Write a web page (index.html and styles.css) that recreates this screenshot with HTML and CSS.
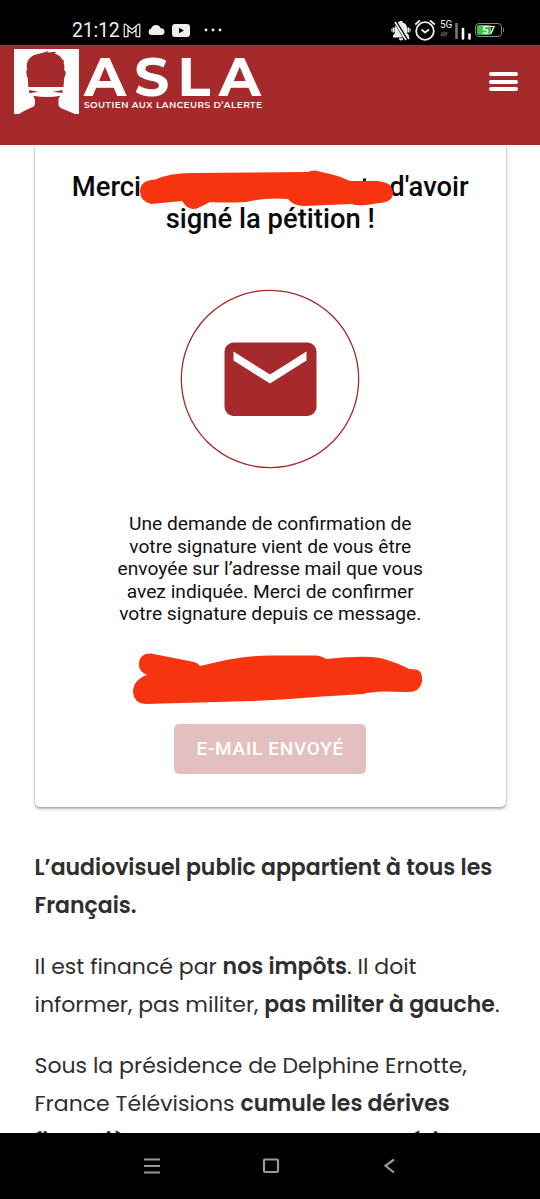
FILE: index.html
```html
<!DOCTYPE html>
<html lang="fr">
<head>
  <meta charset="UTF-8" />
  <meta name="viewport" content="width=device-width, initial-scale=1.0" />
  <title>ASLA – Soutien aux lanceurs d’alerte</title>
  <link rel="stylesheet" href="styles.css">
</head>

<body>
  <!-- Status bar -->
  <div class="status-bar">
    <div class="status-left">
      <span class="clock">21:12</span>
      <svg class="icon-mail" viewBox="0 0 18 15" width="18" height="15">
        <path d="M1.2 13.6V2.4Q1.2 .8 2.7 1.3L9 6.5L15.3 1.3Q16.8 .8 16.8 2.4V13.6H13V6.8L9 10.2L5 6.8V13.6Z"/>
        <path d="M5 6.8V3.4M13 6.8V3.4"/>
      </svg>
      <svg class="icon-cloud" viewBox="0 0 17 10" width="17" height="10">
        <path d="M3.5 10A3.3 3.3 0 0 1 3.2 3.5A5 5 0 0 1 12.6 3.2A3.4 3.4 0 0 1 13.5 10Z"/>
      </svg>
      <svg class="icon-video" viewBox="0 0 18 13" width="18" height="13">
        <rect width="18" height="13" rx="3"/>
        <path d="M7 3.7v5.6l5-2.8z"/>
      </svg>
      <svg class="icon-dots" viewBox="0 0 18 4" width="18" height="4">
        <circle cx="2" cy="2" r="1.4"/><circle cx="9" cy="2" r="1.4"/><circle cx="16" cy="2" r="1.4"/>
      </svg>
    </div>
    <div class="status-right">
      <svg viewBox="0 0 20 21" width="20" height="21">
        <path d="M2 17.5V15.5L4 13V8A5.8 5.8 0 0 1 8.5 2.5V1h3V2.5A5.8 5.8 0 0 1 16 8V13L18 15.5V17.5Z" fill="#eee"/>
        <path d="M7.8 18.2h4.500a2.200 2.200 0 0 1-4.500 0z" fill="#eee"/>
        <path d="M2.600 7.500v5M17.400 7.500v5" stroke="#eee" stroke-width="2"/>
        <path d="M.8 8.500v3M19.200 8.500v3" stroke="#bbb" stroke-width="1.200"/>
        <path d="M4.700 1L16.300 20" stroke="#000" stroke-width="5"/>
        <path d="M4 2L15 20M7.500 2L18 19" stroke="#eee" stroke-width="1.700"/>
      </svg>
      <svg class="icon-alarm" viewBox="0 0 22 22" width="22" height="22">
        <circle cx="11" cy="12" r="8.800"/>
        <path d="M7.500 10.500l3.500 3 4-3M1.200 5.500L6 1.500M20.800 5.500L16 1.500"/>
      </svg>
      <div class="network">
        <span>5G</span>
        <svg viewBox="0 0 8 6" width="8" height="6">
          <path d="M2 1v4M.5 3.500L2 5M4 .5v5M6 5V1L7.500 2.500" fill="none" stroke="#777" stroke-width="1"/>
        </svg>
      </div>
      <svg class="icon-signal" viewBox="0 0 16 18" width="16" height="18">
        <path d="M1.500 1v16" stroke="#777" stroke-width="2.600"/>
        <path d="M8 7v9.500M14.500 12.500v4" stroke="#fff" stroke-width="2.600" stroke-linecap="round"/>
      </svg>
      <div class="battery">
        <div class="battery-level"></div>
        <span>57</span>
      </div>
      <div class="battery-tip"></div>
    </div>
  </div>

  <!-- Site header -->
  <header>
    <div class="logo">
      <svg viewBox="0 0 65 65" width="65" height="65">
        <rect width="65" height="65" fill="#fff"/>
        <path class="logo-head" d="M14.300 38L13.800 29Q12.500 28 12.300 21.500L13.300 21Q11.500 14 15 10Q18 6 24 5Q29 4 34.300 2L33.500 3.500L42.700 2.700L40.500 4.500Q46 6 48 10L50.200 12L49.500 13.500Q51 17 50.300 21.500L51.700 22.500Q52 27 50.200 29L49.500 38Z"/>
        <path class="logo-head" d="M15 41L24.300 42.700L15.300 44.300Z M48.700 41L39 42.700L48.300 43.900Z"/>
        <path class="logo-head" d="M19.300 46.700Q33 49.300 46.300 46.700L44.500 49.500V56Q45 58.500 49 60L61 65H5Q8 62.500 19.300 57.700Q21.500 56 21 51Z"/>
      </svg>
      <svg class="logo-text" viewBox="0 0 180 65" width="180" height="65">
        <text class="logo-name" x="0" y="47" textLength="177" lengthAdjust="spacing">ASLA</text>
        <text class="logo-tagline" x="0" y="58.500" textLength="178">SOUTIEN AUX LANCEURS D’ALERTE</text>
      </svg>
    </div>
    <div class="menu-button">
      <span></span>
      <span></span>
      <span></span>
    </div>
  </header>

  <main>
    <div class="card">
      <h1>
        <span class="title-row">
          <span>Merci</span>
          <svg class="title-marker" viewBox="0 0 254 40" width="254" height="40">
            <path d="M21 8v5M225.500 8.500v5" stroke="#111" stroke-width="3"/>
            <path d="M12 34Q1 31 1 21Q1 10 17 9.500Q30 3 52 3L169 2Q175-1 182 2Q199 5 211 11L238 11Q254 12 254 23Q254 32 240 33Q219 37 213 34L165 36Q154 36 149 29Q128 27 107 32Q85 33 71 32L59 38Q50 42 43 31Z"/>
          </svg>
          <span>d'avoir</span>
        </span>
        <span>signé la pétition !</span>
      </h1>

      <svg class="mail-badge" viewBox="0 0 180 180" width="180" height="180">
        <circle cx="90" cy="90" r="88.700"/>
        <path d="M53.500 53.500h74a9 9 0 0 1 9 9v55.500a9 9 0 0 1-9 9h-74a9 9 0 0 1-9-9V62.500a9 9 0 0 1 9-9z"/>
        <path class="flap" d="M53.500 62.500L90 85.500L126.500 62.500V71.500L90 94.500L53.500 71.500Z"/>
      </svg>

      <p class="card-text">
        Une demande de confirmation de<br>
        votre signature vient de vous être<br>
        envoyée sur l’adresse mail que vous<br>
        avez indiquée. Merci de confirmer<br>
        votre signature depuis ce message.
      </p>

      <svg class="mail-marker" viewBox="0 0 290 52" width="290" height="52">
        <path d="M14 22Q5 18 6 10Q7 0 18 .5L61 9Q65 10 67 13L93 7Q120 2 140 2.500H180Q188 2 193 6Q231 2 247 5Q263 9 276 16L283 16.500Q290 18 289 29Q287 39 275 39L252 38.500Q236 39 230 41L182 44Q150 47 120 48L12 51Q1 50 0 39Q0 27 14 22Z"/>
      </svg>

      <button class="button" disabled>E-MAIL ENVOYÉ</button>
    </div>

    <article>
      <p>
        <strong>L’audiovisuel public appartient à tous les</strong><br>
        <strong>Français.</strong>
      </p>
      <p>
        Il est financé par <strong>nos impôts</strong>. Il doit<br>
        informer, pas militer, <strong>pas militer à gauche</strong>.
      </p>
      <p>
        Sous la présidence de Delphine Ernotte,<br>
        France Télévisions <strong>cumule les dérives<br>
        financières et manquements en série</strong>
      </p>
    </article>
  </main>

  <!-- System navigation -->
  <div class="nav-bar">
    <svg viewBox="0 0 18 18" width="18" height="18"><path d="M1 2.500h16M1 9h16M1 15.500h16"/></svg>
    <svg viewBox="0 0 18 18" width="18" height="18"><rect x="2" y="2.500" width="14" height="12.500" rx="1"/></svg>
    <svg viewBox="0 0 18 18" width="18" height="18"><path d="M13 2.500L4.500 8.800L13 15.500"/></svg>
  </div>
</body>
</html>
```
FILE: styles.css
```css
* {
  box-sizing: border-box;
}

body {
  display: flex;
  flex-direction: column;
  height: 1199px;
  margin: 0;
  background: #fff;
  color: #2e2e2e;
  font-family: Roboto, sans-serif;
  overflow: hidden;
}

/* Status bar */
.status-bar {
  display: flex;
  justify-content: space-between;
  flex: none;
  height: 45px;
  padding: 15px 36px 0 72px;
  background: #000;
  color: #eee;
}

.status-left,
.status-right {
  display: flex;
  align-items: center;
  height: 30px;
}

.clock {
  width: 51px;
  font-size: 19.5px;
  letter-spacing: -0.2px;
}

.icon-mail {
  fill: none;
  stroke: #eee;
  stroke-width: 1.2;
}

.icon-cloud {
  margin-left: 7px;
  fill: #eee;
}

.icon-video {
  margin-left: 7px;
  fill: #eee;
}

.icon-video path {
  fill: #000;
}

.icon-dots {
  margin-left: 14px;
  fill: #eee;
}

.icon-alarm {
  margin-left: 3px;
  fill: none;
  stroke: #eee;
  stroke-width: 1.8;
}

.network {
  display: flex;
  flex-direction: column;
  gap: 1px;
  width: 12px;
  margin: -4px 0 0 4px;
  font-size: 10px;
  line-height: 11px;
}

.icon-signal {
  margin: 1px 0 0 3px;
}

.battery {
  position: relative;
  width: 27px;
  height: 14px;
  margin-left: 4px;
  padding: 1px;
  border: 1px solid #888;
  border-radius: 4px;
}

.battery-level {
  width: 14px;
  height: 10px;
  border-radius: 2px;
  background: #3fbf4b;
}

.battery span {
  position: absolute;
  inset: 0;
  font-size: 11.5px;
  font-weight: 500;
  line-height: 13px;
  text-align: center;
  color: #fff;
}

.battery-tip {
  width: 1px;
  height: 4px;
  margin: 0 0 0 1px;
  background: #777;
}

/* Site header */
header {
  display: flex;
  justify-content: space-between;
  align-items: flex-start;
  flex: none;
  height: 100px;
  padding: 4px 22px 0 14px;
  background: #a62a2b;
}

.logo {
  display: flex;
  gap: 5px;
}

.logo-head {
  fill: #a62a2b;
}

.logo-text {
  overflow: visible;
}

.logo-name,
.logo-tagline {
  fill: #fff;
  font-family: Montserrat, Inter, sans-serif;
}

.logo-name {
  font-size: 55px;
  font-weight: 700;
}

.logo-tagline {
  font-size: 9px;
  font-weight: 600;
}

.menu-button {
  display: flex;
  flex-direction: column;
  gap: 3.5px;
  width: 29px;
  margin-top: 23px;
}

.menu-button span {
  height: 4px;
  border-radius: 2px;
  background: #fff;
}

/* Confirmation card */
main {
  flex: 1;
  min-height: 0;
  padding: 0 34px;
  overflow: hidden;
}

.card {
  display: flex;
  flex-direction: column;
  align-items: center;
  height: 662px;
  margin-left: 0.5px;
  padding-top: 26px;
  border-radius: 0 0 5px 5px;
  box-shadow: 0 2px 3px rgba(0, 0, 0, 0.3), 0 0 3px rgba(0, 0, 0, 0.18);
}

h1 {
  display: flex;
  flex-direction: column;
  align-items: center;
  margin: 0;
  font-size: 27.4px;
  font-weight: 500;
  line-height: 32px;
  color: #0a0a0a;
}

.title-row {
  position: relative;
  display: flex;
  justify-content: space-between;
  width: 397px;
}

.title-marker {
  position: absolute;
  top: -1px;
  left: 67px;
  fill: #f6340f;
}

.mail-badge {
  margin-top: 54px;
  fill: #a62a2b;
}

.mail-badge circle {
  fill: none;
  stroke: #a62a2b;
  stroke-width: 1.3;
}

.mail-badge .flap {
  fill: #fff;
}

.card-text {
  margin: 44px 0 0;
  font-size: 19.2px;
  line-height: 22.5px;
  text-align: center;
  color: #111;
}

.mail-marker {
  margin: 27px 0 0 15px;
  fill: #f6340f;
}

.button {
  width: 192px;
  height: 50px;
  margin-top: 19px;
  border: none;
  border-radius: 5px;
  background: #e4bfc0;
  color: #fff;
  font-family: Roboto, sans-serif;
  font-size: 19px;
  font-weight: 500;
  letter-spacing: 0.7px;
}

/* Petition text */
article {
  padding: 42px 0 0 0.5px;
  font-family: Poppins, Inter, sans-serif;
  font-size: 22px;
  line-height: 38.4px;
  white-space: nowrap;
}

article p {
  margin: 0 0 22px;
}

article strong {
  font-weight: 600;
}

/* System navigation */
.nav-bar {
  display: flex;
  justify-content: center;
  align-items: center;
  gap: 101px;
  flex: none;
  height: 66px;
  padding-left: 1px;
  background: #000;
}

.nav-bar svg {
  fill: none;
  stroke: #999;
  stroke-width: 2.2;
}
```
